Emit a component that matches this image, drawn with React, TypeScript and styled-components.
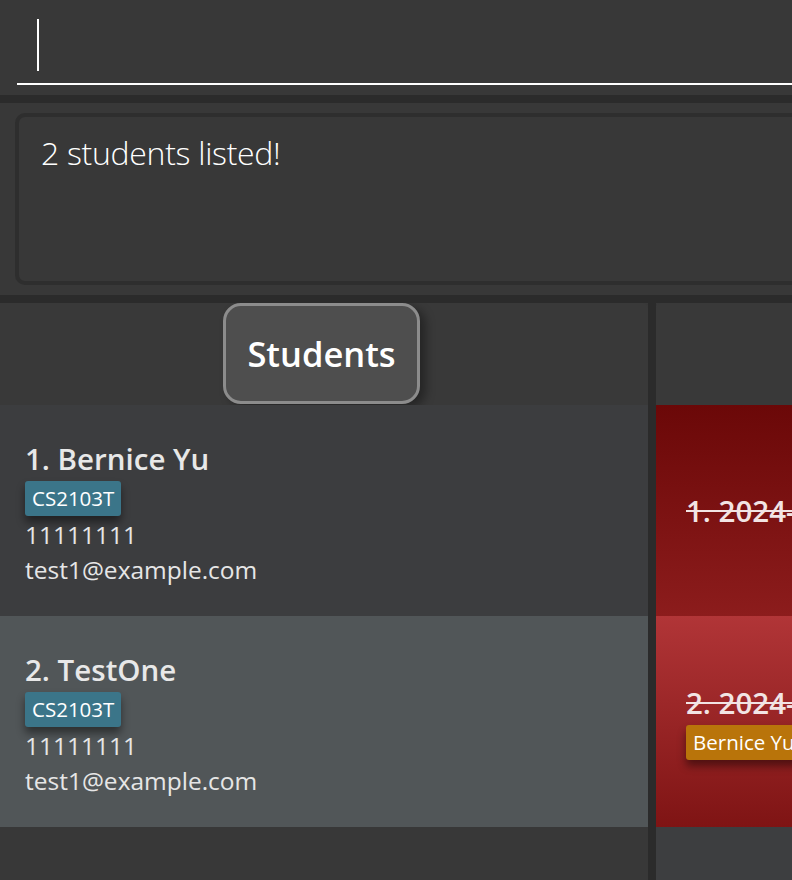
import React from "react";
import styled, { createGlobalStyle } from "styled-components";

const GlobalStyle = createGlobalStyle`
  html, body {
    margin: 0;
    padding: 0;
    background: #383838;
    overflow: hidden;
  }
  * { box-sizing: border-box; }
`;

const Window = styled.div`
  width: 1320px;
  height: 880px;
  display: flex;
  flex-direction: column;
  background: #383838;
  font-family: "Open Sans", "Noto Sans", sans-serif;
`;

const CommandBar = styled.div`
  height: 95px;
  padding-left: 17px;
  flex-shrink: 0;
`;

const CommandField = styled.div`
  height: 85px;
  border-bottom: 2px solid #ffffff;
  padding: 19px 0 0 20px;
`;

const Caret = styled.div`
  width: 2px;
  height: 52px;
  background: #ffffff;
`;

const Band = styled.div`
  height: 8px;
  background: #2b2b2b;
  flex-shrink: 0;
`;

const ResultArea = styled.div`
  height: 192px;
  padding: 10px 0 10px 15px;
  flex-shrink: 0;
`;

const ResultBox = styled.div`
  height: 172px;
  border: 4px solid #2e2e2e;
  border-radius: 10px;
  background: #383838;
  padding: 16px 22px;
  color: #ffffff;
  font-weight: 300;
  font-size: 32px;
  letter-spacing: -0.3px;
  line-height: 40px;
`;

const Main = styled.div`
  flex: 1;
  display: flex;
  min-height: 0;
`;

const Panel = styled.div<{ $width?: number; $listBg: string; $round: "left" | "right" }>`
  ${(p) => (p.$width ? `width: ${p.$width}px;` : "flex: 1;")}
  display: flex;
  flex-direction: column;
  background: ${(p) => p.$listBg};
  border-top-${(p) => (p.$round === "left" ? "right" : "left")}-radius: 5px;
  overflow: hidden;
`;

const PanelHeader = styled.div`
  height: 102px;
  background: #393939;
  display: flex;
  justify-content: center;
  padding-right: 5px;
  flex-shrink: 0;
`;

const TabButton = styled.div<{ $hidden?: boolean }>`
  width: 197px;
  height: 101px;
  border: 3px solid #8c8c8c;
  border-radius: 18px;
  background: #4e4e4e;
  color: #ffffff;
  font-weight: 600;
  font-size: 34.5px;
  display: flex;
  align-items: center;
  justify-content: center;
  box-shadow: 6px 4px 10px rgba(0, 0, 0, 0.35);
  visibility: ${(p) => (p.$hidden ? "hidden" : "visible")};
`;

const Divider = styled.div`
  width: 8px;
  background: #2b2b2b;
  flex-shrink: 0;
`;

const StudentCard = styled.div<{ $bg: string }>`
  height: 211px;
  background: ${(p) => p.$bg};
  padding: 34px 25px 0 25px;
  display: flex;
  flex-direction: column;
  align-items: flex-start;
  color: #e6e6e6;
`;

const Name = styled.div`
  font-weight: 600;
  font-size: 29.5px;
  line-height: 40px;
  color: #e8e8e8;
`;

const Tag = styled.div<{ $bg: string }>`
  height: 35px;
  padding: 0 7px;
  border-radius: 3px;
  background: ${(p) => p.$bg};
  color: #ffffff;
  font-size: 20.5px;
  line-height: 35px;
  box-shadow: 0 6px 8px rgba(0, 0, 0, 0.45);
  margin: 2px 0 1px 0;
  white-space: nowrap;
`;

const Detail = styled.div`
  font-size: 24.5px;
  line-height: 35px;
  color: #e6e6e6;
`;

const EventCard = styled.div<{ $from: string; $to: string }>`
  height: 211px;
  background: linear-gradient(to bottom, ${(p) => p.$from}, ${(p) => p.$to});
  padding: 0 30px;
  display: flex;
  flex-direction: column;
  justify-content: center;
  align-items: flex-start;
`;

const EventTitle = styled.div`
  font-weight: 600;
  font-size: 29.5px;
  line-height: 40px;
  color: #f2e4e4;
  text-decoration: line-through;
  white-space: nowrap;
`;

const students = [
  { name: "1. Bernice Yu", bg: "#3c3d3f" },
  { name: "2. TestOne", bg: "#515658" },
];

export default function App() {
  return (
    <>
      <GlobalStyle />
      <Window>
        <CommandBar>
          <CommandField>
            <Caret />
          </CommandField>
        </CommandBar>
        <Band />
        <ResultArea>
          <ResultBox>2 students listed!</ResultBox>
        </ResultArea>
        <Band />
        <Main>
          <Panel $width={648} $listBg="#383838" $round="left">
            <PanelHeader>
              <TabButton>Students</TabButton>
            </PanelHeader>
            {students.map((s) => (
              <StudentCard key={s.name} $bg={s.bg}>
                <Name>{s.name}</Name>
                <Tag $bg="#3b7589">CS2103T</Tag>
                <Detail>11111111</Detail>
                <Detail>test1@example.com</Detail>
              </StudentCard>
            ))}
          </Panel>
          <Divider />
          <Panel $listBg="#3d3e40" $round="right">
            <PanelHeader>
              <TabButton $hidden>Events</TabButton>
            </PanelHeader>
            <EventCard $from="#6b0808" $to="#8c1c1c">
              <EventTitle>1. 2024-10-28 Consultation</EventTitle>
            </EventCard>
            <EventCard $from="#b13537" $to="#7f1414">
              <EventTitle>2. 2024-10-30 Group meeting</EventTitle>
              <Tag $bg="#b9740a">Bernice Yu</Tag>
            </EventCard>
          </Panel>
        </Main>
      </Window>
    </>
  );
}
